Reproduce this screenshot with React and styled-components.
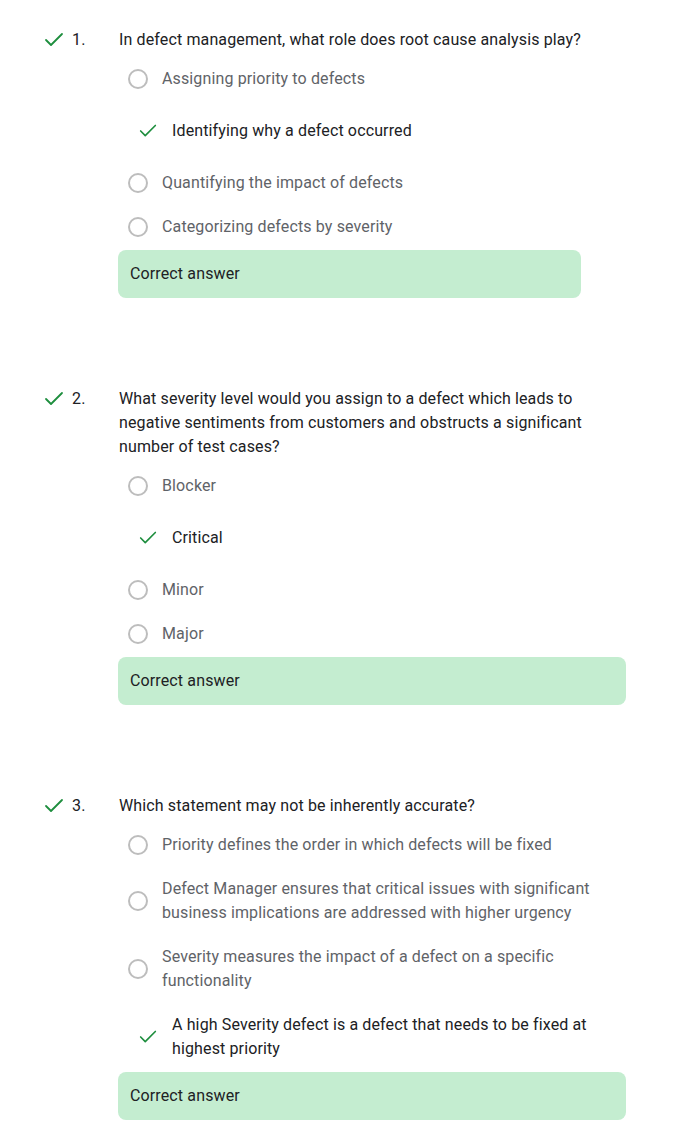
import React from "react";
import styled, { createGlobalStyle } from "styled-components";
import { Check } from "lucide-react";

const questions = [
  {
    number: 1,
    text: "In defect management, what role does root cause analysis play?",
    options: [
      "Assigning priority to defects",
      "Identifying why a defect occurred",
      "Quantifying the impact of defects",
      "Categorizing defects by severity",
    ],
    correct: 1,
  },
  {
    number: 2,
    text: "What severity level would you assign to a defect which leads to negative sentiments from customers and obstructs a significant number of test cases?",
    options: ["Blocker", "Critical", "Minor", "Major"],
    correct: 1,
  },
  {
    number: 3,
    text: "Which statement may not be inherently accurate?",
    options: [
      "Priority defines the order in which defects will be fixed",
      "Defect Manager ensures that critical issues with significant business implications are addressed with higher urgency",
      "Severity measures the impact of a defect on a specific functionality",
      "A high Severity defect is a defect that needs to be fixed at highest priority",
    ],
    correct: 3,
  },
];

const App = () => {
  return (
    <Page>
      <GlobalStyle />
      {questions.map((q) => (
        <Question key={q.number}>
          <Marker>
            <Check size={24} strokeWidth={1.8} color="#1e8e3e" />
            <Number>{q.number}.</Number>
          </Marker>
          <Body>
            <Prompt>{q.text}</Prompt>
            <Options>
              {q.options.map((opt, i) =>
                i === q.correct ? (
                  <Option key={i} $checked>
                    <CheckBox>
                      <Check size={22} strokeWidth={1.8} color="#1e8e3e" />
                    </CheckBox>
                    <Label $checked>{opt}</Label>
                  </Option>
                ) : (
                  <Option key={i}>
                    <Radio />
                    <Label>{opt}</Label>
                  </Option>
                )
              )}
            </Options>
            <Feedback>Correct answer</Feedback>
          </Body>
        </Question>
      ))}
    </Page>
  );
};

export default App;

const GlobalStyle = createGlobalStyle`
  body {
    margin: 0;
    background: #fff;
    font-family: Roboto, "Liberation Sans", sans-serif;
    letter-spacing: 0.13px;
    color: #202124;
  }
`;

const Page = styled.div`
  padding: 28px 0 40px 42px;
  display: flex;
  flex-direction: column;
  gap: 89px;
`;

const Question = styled.div`
  display: flex;
  align-items: flex-start;
`;

const Marker = styled.div`
  width: 76px;
  flex-shrink: 0;
  display: flex;
  align-items: center;
  height: 24px;
  gap: 6px;
`;

const Number = styled.span`
  font-size: 16px;
  line-height: 24px;
  color: #202124;
`;

const Body = styled.div`
  width: fit-content;
  max-width: 508px;
  display: flex;
  flex-direction: column;
`;

const Prompt = styled.div`
  font-size: 16px;
  line-height: 24px;
  color: #202124;
  margin-bottom: 5px;
  padding-left: 1px;
`;

const Options = styled.div`
  display: flex;
  flex-direction: column;
  margin-bottom: 1px;
`;

const Option = styled.div`
  display: flex;
  align-items: center;
  padding: 10px 0 10px ${(p) => (p.$checked ? "18px" : "10px")};
  gap: ${(p) => (p.$checked ? "12px" : "14px")};
  min-height: ${(p) => (p.$checked ? "60px" : "44px")};
  box-sizing: border-box;
`;

const Radio = styled.span`
  width: 20px;
  height: 20px;
  flex-shrink: 0;
  box-sizing: border-box;
  border: 2px solid #bdbdbd;
  border-radius: 50%;
`;

const CheckBox = styled.span`
  width: 24px;
  height: 24px;
  flex-shrink: 0;
  display: flex;
  align-items: center;
  justify-content: center;
`;

const Label = styled.span`
  font-size: 16px;
  line-height: 24px;
  color: ${(p) => (p.$checked ? "#202124" : "#5f6368")};
`;

const Feedback = styled.div`
  background: #c4edd0;
  border-radius: 8px;
  padding: 12px;
  font-size: 16px;
  line-height: 24px;
  color: #202124;
`;
